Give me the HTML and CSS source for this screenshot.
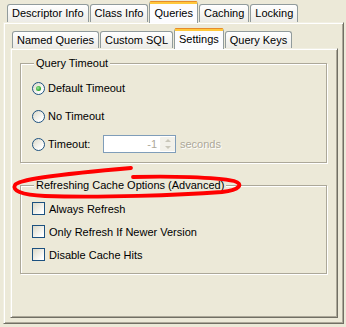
FILE: index.html
```html
<!DOCTYPE html>
<html lang="en">
<head>
    <meta charset="UTF-8">
    <title>Descriptor Settings</title>
    <link rel="stylesheet" href="styles.css">
</head>
<body>
<div class="window">
    <div class="tabs outer-tabs">
        <div class="tab">Descriptor Info</div>
        <div class="tab">Class Info</div>
        <div class="tab active">Queries</div>
        <div class="tab">Caching</div>
        <div class="tab">Locking</div>
    </div>
    <div class="panel outer-panel">
        <div class="tabs inner-tabs">
            <div class="tab">Named Queries</div>
            <div class="tab">Custom SQL</div>
            <div class="tab active">Settings</div>
            <div class="tab">Query Keys</div>
        </div>
        <div class="panel inner-panel">
            <fieldset class="group timeout-group">
                <legend>Query Timeout</legend>
                <div class="option">
                    <span class="radio checked"></span>
                    <span>Default Timeout</span>
                </div>
                <div class="option">
                    <span class="radio"></span>
                    <span>No Timeout</span>
                </div>
                <div class="option">
                    <span class="radio"></span>
                    <span class="timeout-label">Timeout:</span>
                    <div class="spinner">
                        <span class="spin-value">-1</span>
                        <span class="spin-buttons">
                            <span class="spin-btn"><span class="arrow up"></span></span>
                            <span class="spin-btn"><span class="arrow down"></span></span>
                        </span>
                    </div>
                    <span class="disabled-text">seconds</span>
                </div>
            </fieldset>

            <fieldset class="group cache-group">
                <legend>Refreshing Cache Options (Advanced)</legend>
                <div class="check-row">
                    <span class="checkbox"></span>
                    <span>Always Refresh</span>
                </div>
                <div class="check-row">
                    <span class="checkbox"></span>
                    <span>Only Refresh If Newer Version</span>
                </div>
                <div class="check-row">
                    <span class="checkbox"></span>
                    <span>Disable Cache Hits</span>
                </div>
            </fieldset>
        </div>
    </div>

    <!-- hand-drawn highlight around the legend -->
    <svg class="scribble" width="346" height="327" viewBox="0 0 346 327">
        <path d="M133,177 C170,176 215,177 234,181 C244,184 240,190 222,192 C180,195 100,198 45,196 C20,195 12,190 15,185 C18,180 50,175 131,168"
              fill="none" stroke="#f00" stroke-width="3.8" stroke-linecap="round"/>
    </svg>
</div>
</body>
</html>
```

FILE: styles.css
```css
body {
    margin: 0;
    background-color: #ece9d8;
    font-family: "Liberation Sans", Arial, sans-serif;
    font-size: 11px;
    color: #000;
}

.window {
    position: relative;
    width: 346px;
    height: 327px;
    box-sizing: border-box;
    padding: 1px 2px 3px 3px;
    display: flex;
    flex-direction: column;
}

/* tabs */

.tabs {
    display: flex;
    align-items: flex-end;
    position: relative;
    z-index: 1;
}

.outer-tabs {
    height: 21px;
    padding-left: 4px;
}

.inner-tabs {
    height: 20px;
    padding-left: 2px;
}

.tab {
    height: 17px;
    line-height: 17px;
    padding: 0 4px;
    margin-right: 1px;
    border: 1px solid #919b9c;
    border-bottom: none;
    border-radius: 3px 3px 0 0;
    background: linear-gradient(#ffffff, #ecebe6);
    white-space: nowrap;
}

.inner-tabs .tab {
    height: 16px;
    line-height: 16px;
}

.tab.active {
    height: 19px;
    line-height: 18px;
    border-top: 3px solid #ffc83c;
    background: #fcfcfe;
    margin-bottom: -1px;
    position: relative;
}

.tab.active::before {
    content: "";
    position: absolute;
    left: 0;
    right: 0;
    top: -3px;
    height: 1px;
    background: #e68b2c;
    border-radius: 3px 3px 0 0;
}

.inner-tabs .tab.active {
    height: 18px;
    line-height: 17px;
}

/* panels */

.panel {
    border: 1px solid;
    border-color: #f1efe2 #716f64 #716f64 #f1efe2;
    box-shadow: inset 1px 1px 0 #fff, inset -1px -1px 0 #aca899;
    background-color: #ece9d8;
}

.outer-panel {
    flex: 1;
    display: flex;
    flex-direction: column;
    padding: 5px 5px 5px 6px;
}

.inner-panel {
    flex: 1;
    padding: 8px 10px 0 9px;
}

/* group boxes */

.group {
    margin: 0;
    padding: 4px 0 4px 11px;
    border: 1px solid #aca899;
    box-shadow: inset 1px 1px 0 #fff, 1px 1px 0 #fff;
}

.group legend {
    padding: 0 2px;
    margin-left: 2px;
    line-height: 13px;
    background-color: #ece9d8;
}

.cache-group {
    margin-top: 16px;
    padding-top: 5px;
    padding-bottom: 7px;
}

.option {
    display: flex;
    align-items: center;
    height: 28px;
}

.check-row {
    display: flex;
    align-items: center;
    height: 23px;
}

.radio {
    width: 13px;
    height: 13px;
    box-sizing: border-box;
    border: 1px solid #1c5180;
    border-radius: 50%;
    background: linear-gradient(135deg, #dcd9c8, #ffffff 80%);
    margin-right: 3px;
    position: relative;
}

.radio.checked::after {
    content: "";
    position: absolute;
    left: 3px;
    top: 3px;
    width: 5px;
    height: 5px;
    border-radius: 50%;
    background: radial-gradient(circle at 40% 40%, #9ee79e, #21a121 70%);
}

.checkbox {
    width: 13px;
    height: 13px;
    box-sizing: border-box;
    border: 1px solid #1c5180;
    background: linear-gradient(135deg, #dcd9c8, #ffffff 85%);
    margin-right: 4px;
}

.timeout-label {
    width: 55px;
}

.spinner {
    display: flex;
    width: 73px;
    height: 18px;
    box-sizing: border-box;
    border: 1px solid #7f9db9;
    background-color: #fff;
    margin-right: 4px;
}

.spin-value {
    flex: 1;
    text-align: right;
    line-height: 16px;
    padding-right: 3px;
    color: #aca899;
}

.spin-buttons {
    width: 15px;
    display: flex;
    flex-direction: column;
    padding: 1px 0 1px 0;
    box-sizing: border-box;
}

.spin-btn {
    flex: 1;
    display: flex;
    align-items: center;
    justify-content: center;
    background-color: #f2f1ea;
    border-radius: 1px;
}

.arrow {
    width: 0;
    height: 0;
    border-left: 3px solid transparent;
    border-right: 3px solid transparent;
}

.arrow.up {
    border-bottom: 3px solid #c9c7ba;
}

.arrow.down {
    border-top: 3px solid #c9c7ba;
}

.disabled-text {
    color: #aca899;
    text-shadow: 1px 1px 0 #fff;
}

.scribble {
    position: absolute;
    left: 0;
    top: 0;
    pointer-events: none;
}
```
